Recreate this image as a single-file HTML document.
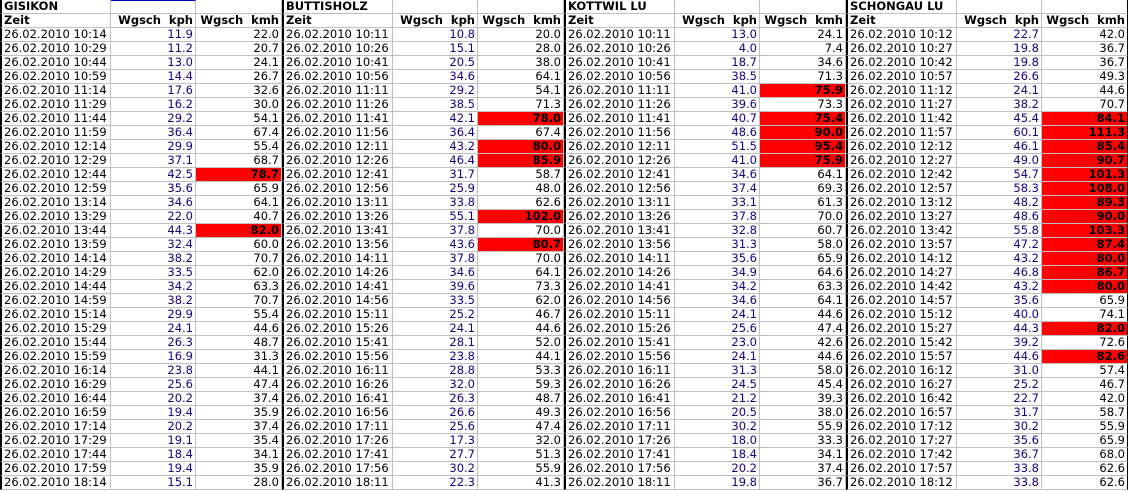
<!DOCTYPE html>
<html><head><meta charset="utf-8"><style>
html,body{margin:0;padding:0;background:#fff;width:1128px;height:491px;overflow:hidden}
table{border-collapse:separate;border-spacing:0;table-layout:fixed;width:1128px;font-family:"DejaVu Sans","Liberation Sans",sans-serif;font-size:11.5px;color:#000}
td{height:13px;line-height:13px;padding:0 2px 0 3px;border-right:1px solid #c0c0c0;border-bottom:1px solid #c0c0c0;white-space:pre;overflow:hidden;text-align:right}
td.z{text-align:left;border-left:2px solid #000;padding-left:2px}
td.k{color:#1a0080}
td.r{background:#ff0000;font-weight:bold}
td.e{border-right:1px solid #000}
tr.h td{font-weight:bold}
</style></head><body>
<table>
<colgroup><col style="width:111px"><col style="width:85px"><col style="width:86px"><col style="width:111px"><col style="width:85px"><col style="width:86px"><col style="width:111px"><col style="width:85px"><col style="width:86px"><col style="width:111px"><col style="width:85px"><col style="width:86px"></colgroup>
<tr class="h"><td class="z">GISIKON</td><td style="border-top:1px solid #0000c0;height:12px"></td><td></td><td class="z">BUTTISHOLZ</td><td></td><td></td><td class="z">KOTTWIL LU</td><td></td><td></td><td class="z">SCHONGAU LU</td><td></td><td class="e"></td></tr>
<tr class="h"><td class="z">Zeit</td><td>Wgsch  kph</td><td>Wgsch  kmh</td><td class="z">Zeit</td><td>Wgsch  kph</td><td>Wgsch  kmh</td><td class="z">Zeit</td><td>Wgsch  kph</td><td>Wgsch  kmh</td><td class="z">Zeit</td><td>Wgsch  kph</td><td class="e">Wgsch  kmh</td></tr>
<tr><td class="z">26.02.2010 10:14</td><td class="k">11.9</td><td>22.0</td><td class="z">26.02.2010 10:11</td><td class="k">10.8</td><td>20.0</td><td class="z">26.02.2010 10:11</td><td class="k">13.0</td><td>24.1</td><td class="z">26.02.2010 10:12</td><td class="k">22.7</td><td class="e">42.0</td></tr>
<tr><td class="z">26.02.2010 10:29</td><td class="k">11.2</td><td>20.7</td><td class="z">26.02.2010 10:26</td><td class="k">15.1</td><td>28.0</td><td class="z">26.02.2010 10:26</td><td class="k">4.0</td><td>7.4</td><td class="z">26.02.2010 10:27</td><td class="k">19.8</td><td class="e">36.7</td></tr>
<tr><td class="z">26.02.2010 10:44</td><td class="k">13.0</td><td>24.1</td><td class="z">26.02.2010 10:41</td><td class="k">20.5</td><td>38.0</td><td class="z">26.02.2010 10:41</td><td class="k">18.7</td><td>34.6</td><td class="z">26.02.2010 10:42</td><td class="k">19.8</td><td class="e">36.7</td></tr>
<tr><td class="z">26.02.2010 10:59</td><td class="k">14.4</td><td>26.7</td><td class="z">26.02.2010 10:56</td><td class="k">34.6</td><td>64.1</td><td class="z">26.02.2010 10:56</td><td class="k">38.5</td><td>71.3</td><td class="z">26.02.2010 10:57</td><td class="k">26.6</td><td class="e">49.3</td></tr>
<tr><td class="z">26.02.2010 11:14</td><td class="k">17.6</td><td>32.6</td><td class="z">26.02.2010 11:11</td><td class="k">29.2</td><td>54.1</td><td class="z">26.02.2010 11:11</td><td class="k">41.0</td><td class="r">75.9</td><td class="z">26.02.2010 11:12</td><td class="k">24.1</td><td class="e">44.6</td></tr>
<tr><td class="z">26.02.2010 11:29</td><td class="k">16.2</td><td>30.0</td><td class="z">26.02.2010 11:26</td><td class="k">38.5</td><td>71.3</td><td class="z">26.02.2010 11:26</td><td class="k">39.6</td><td>73.3</td><td class="z">26.02.2010 11:27</td><td class="k">38.2</td><td class="e">70.7</td></tr>
<tr><td class="z">26.02.2010 11:44</td><td class="k">29.2</td><td>54.1</td><td class="z">26.02.2010 11:41</td><td class="k">42.1</td><td class="r">78.0</td><td class="z">26.02.2010 11:41</td><td class="k">40.7</td><td class="r">75.4</td><td class="z">26.02.2010 11:42</td><td class="k">45.4</td><td class="r e">84.1</td></tr>
<tr><td class="z">26.02.2010 11:59</td><td class="k">36.4</td><td>67.4</td><td class="z">26.02.2010 11:56</td><td class="k">36.4</td><td>67.4</td><td class="z">26.02.2010 11:56</td><td class="k">48.6</td><td class="r">90.0</td><td class="z">26.02.2010 11:57</td><td class="k">60.1</td><td class="r e">111.3</td></tr>
<tr><td class="z">26.02.2010 12:14</td><td class="k">29.9</td><td>55.4</td><td class="z">26.02.2010 12:11</td><td class="k">43.2</td><td class="r">80.0</td><td class="z">26.02.2010 12:11</td><td class="k">51.5</td><td class="r">95.4</td><td class="z">26.02.2010 12:12</td><td class="k">46.1</td><td class="r e">85.4</td></tr>
<tr><td class="z">26.02.2010 12:29</td><td class="k">37.1</td><td>68.7</td><td class="z">26.02.2010 12:26</td><td class="k">46.4</td><td class="r">85.9</td><td class="z">26.02.2010 12:26</td><td class="k">41.0</td><td class="r">75.9</td><td class="z">26.02.2010 12:27</td><td class="k">49.0</td><td class="r e">90.7</td></tr>
<tr><td class="z">26.02.2010 12:44</td><td class="k">42.5</td><td class="r">78.7</td><td class="z">26.02.2010 12:41</td><td class="k">31.7</td><td>58.7</td><td class="z">26.02.2010 12:41</td><td class="k">34.6</td><td>64.1</td><td class="z">26.02.2010 12:42</td><td class="k">54.7</td><td class="r e">101.3</td></tr>
<tr><td class="z">26.02.2010 12:59</td><td class="k">35.6</td><td>65.9</td><td class="z">26.02.2010 12:56</td><td class="k">25.9</td><td>48.0</td><td class="z">26.02.2010 12:56</td><td class="k">37.4</td><td>69.3</td><td class="z">26.02.2010 12:57</td><td class="k">58.3</td><td class="r e">108.0</td></tr>
<tr><td class="z">26.02.2010 13:14</td><td class="k">34.6</td><td>64.1</td><td class="z">26.02.2010 13:11</td><td class="k">33.8</td><td>62.6</td><td class="z">26.02.2010 13:11</td><td class="k">33.1</td><td>61.3</td><td class="z">26.02.2010 13:12</td><td class="k">48.2</td><td class="r e">89.3</td></tr>
<tr><td class="z">26.02.2010 13:29</td><td class="k">22.0</td><td>40.7</td><td class="z">26.02.2010 13:26</td><td class="k">55.1</td><td class="r">102.0</td><td class="z">26.02.2010 13:26</td><td class="k">37.8</td><td>70.0</td><td class="z">26.02.2010 13:27</td><td class="k">48.6</td><td class="r e">90.0</td></tr>
<tr><td class="z">26.02.2010 13:44</td><td class="k">44.3</td><td class="r">82.0</td><td class="z">26.02.2010 13:41</td><td class="k">37.8</td><td>70.0</td><td class="z">26.02.2010 13:41</td><td class="k">32.8</td><td>60.7</td><td class="z">26.02.2010 13:42</td><td class="k">55.8</td><td class="r e">103.3</td></tr>
<tr><td class="z">26.02.2010 13:59</td><td class="k">32.4</td><td>60.0</td><td class="z">26.02.2010 13:56</td><td class="k">43.6</td><td class="r">80.7</td><td class="z">26.02.2010 13:56</td><td class="k">31.3</td><td>58.0</td><td class="z">26.02.2010 13:57</td><td class="k">47.2</td><td class="r e">87.4</td></tr>
<tr><td class="z">26.02.2010 14:14</td><td class="k">38.2</td><td>70.7</td><td class="z">26.02.2010 14:11</td><td class="k">37.8</td><td>70.0</td><td class="z">26.02.2010 14:11</td><td class="k">35.6</td><td>65.9</td><td class="z">26.02.2010 14:12</td><td class="k">43.2</td><td class="r e">80.0</td></tr>
<tr><td class="z">26.02.2010 14:29</td><td class="k">33.5</td><td>62.0</td><td class="z">26.02.2010 14:26</td><td class="k">34.6</td><td>64.1</td><td class="z">26.02.2010 14:26</td><td class="k">34.9</td><td>64.6</td><td class="z">26.02.2010 14:27</td><td class="k">46.8</td><td class="r e">86.7</td></tr>
<tr><td class="z">26.02.2010 14:44</td><td class="k">34.2</td><td>63.3</td><td class="z">26.02.2010 14:41</td><td class="k">39.6</td><td>73.3</td><td class="z">26.02.2010 14:41</td><td class="k">34.2</td><td>63.3</td><td class="z">26.02.2010 14:42</td><td class="k">43.2</td><td class="r e">80.0</td></tr>
<tr><td class="z">26.02.2010 14:59</td><td class="k">38.2</td><td>70.7</td><td class="z">26.02.2010 14:56</td><td class="k">33.5</td><td>62.0</td><td class="z">26.02.2010 14:56</td><td class="k">34.6</td><td>64.1</td><td class="z">26.02.2010 14:57</td><td class="k">35.6</td><td class="e">65.9</td></tr>
<tr><td class="z">26.02.2010 15:14</td><td class="k">29.9</td><td>55.4</td><td class="z">26.02.2010 15:11</td><td class="k">25.2</td><td>46.7</td><td class="z">26.02.2010 15:11</td><td class="k">24.1</td><td>44.6</td><td class="z">26.02.2010 15:12</td><td class="k">40.0</td><td class="e">74.1</td></tr>
<tr><td class="z">26.02.2010 15:29</td><td class="k">24.1</td><td>44.6</td><td class="z">26.02.2010 15:26</td><td class="k">24.1</td><td>44.6</td><td class="z">26.02.2010 15:26</td><td class="k">25.6</td><td>47.4</td><td class="z">26.02.2010 15:27</td><td class="k">44.3</td><td class="r e">82.0</td></tr>
<tr><td class="z">26.02.2010 15:44</td><td class="k">26.3</td><td>48.7</td><td class="z">26.02.2010 15:41</td><td class="k">28.1</td><td>52.0</td><td class="z">26.02.2010 15:41</td><td class="k">23.0</td><td>42.6</td><td class="z">26.02.2010 15:42</td><td class="k">39.2</td><td class="e">72.6</td></tr>
<tr><td class="z">26.02.2010 15:59</td><td class="k">16.9</td><td>31.3</td><td class="z">26.02.2010 15:56</td><td class="k">23.8</td><td>44.1</td><td class="z">26.02.2010 15:56</td><td class="k">24.1</td><td>44.6</td><td class="z">26.02.2010 15:57</td><td class="k">44.6</td><td class="r e">82.6</td></tr>
<tr><td class="z">26.02.2010 16:14</td><td class="k">23.8</td><td>44.1</td><td class="z">26.02.2010 16:11</td><td class="k">28.8</td><td>53.3</td><td class="z">26.02.2010 16:11</td><td class="k">31.3</td><td>58.0</td><td class="z">26.02.2010 16:12</td><td class="k">31.0</td><td class="e">57.4</td></tr>
<tr><td class="z">26.02.2010 16:29</td><td class="k">25.6</td><td>47.4</td><td class="z">26.02.2010 16:26</td><td class="k">32.0</td><td>59.3</td><td class="z">26.02.2010 16:26</td><td class="k">24.5</td><td>45.4</td><td class="z">26.02.2010 16:27</td><td class="k">25.2</td><td class="e">46.7</td></tr>
<tr><td class="z">26.02.2010 16:44</td><td class="k">20.2</td><td>37.4</td><td class="z">26.02.2010 16:41</td><td class="k">26.3</td><td>48.7</td><td class="z">26.02.2010 16:41</td><td class="k">21.2</td><td>39.3</td><td class="z">26.02.2010 16:42</td><td class="k">22.7</td><td class="e">42.0</td></tr>
<tr><td class="z">26.02.2010 16:59</td><td class="k">19.4</td><td>35.9</td><td class="z">26.02.2010 16:56</td><td class="k">26.6</td><td>49.3</td><td class="z">26.02.2010 16:56</td><td class="k">20.5</td><td>38.0</td><td class="z">26.02.2010 16:57</td><td class="k">31.7</td><td class="e">58.7</td></tr>
<tr><td class="z">26.02.2010 17:14</td><td class="k">20.2</td><td>37.4</td><td class="z">26.02.2010 17:11</td><td class="k">25.6</td><td>47.4</td><td class="z">26.02.2010 17:11</td><td class="k">30.2</td><td>55.9</td><td class="z">26.02.2010 17:12</td><td class="k">30.2</td><td class="e">55.9</td></tr>
<tr><td class="z">26.02.2010 17:29</td><td class="k">19.1</td><td>35.4</td><td class="z">26.02.2010 17:26</td><td class="k">17.3</td><td>32.0</td><td class="z">26.02.2010 17:26</td><td class="k">18.0</td><td>33.3</td><td class="z">26.02.2010 17:27</td><td class="k">35.6</td><td class="e">65.9</td></tr>
<tr><td class="z">26.02.2010 17:44</td><td class="k">18.4</td><td>34.1</td><td class="z">26.02.2010 17:41</td><td class="k">27.7</td><td>51.3</td><td class="z">26.02.2010 17:41</td><td class="k">18.4</td><td>34.1</td><td class="z">26.02.2010 17:42</td><td class="k">36.7</td><td class="e">68.0</td></tr>
<tr><td class="z">26.02.2010 17:59</td><td class="k">19.4</td><td>35.9</td><td class="z">26.02.2010 17:56</td><td class="k">30.2</td><td>55.9</td><td class="z">26.02.2010 17:56</td><td class="k">20.2</td><td>37.4</td><td class="z">26.02.2010 17:57</td><td class="k">33.8</td><td class="e">62.6</td></tr>
<tr><td class="z">26.02.2010 18:14</td><td class="k">15.1</td><td>28.0</td><td class="z">26.02.2010 18:11</td><td class="k">22.3</td><td>41.3</td><td class="z">26.02.2010 18:11</td><td class="k">19.8</td><td>36.7</td><td class="z">26.02.2010 18:12</td><td class="k">33.8</td><td class="e">62.6</td></tr>
</table>
</body></html>
